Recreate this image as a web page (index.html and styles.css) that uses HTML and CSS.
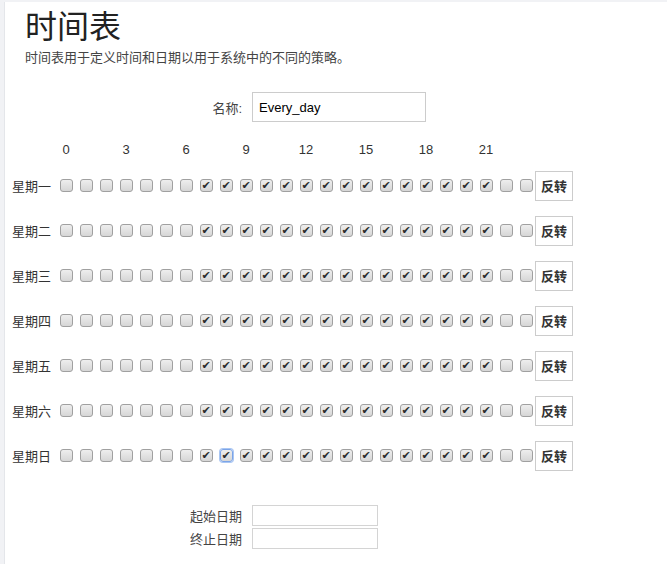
FILE: index.html
```html
<!DOCTYPE html>
<html lang="zh-CN">
<head>
    <meta charset="UTF-8">
    <meta name="viewport" content="width=device-width, initial-scale=1.0">
    <title>时间表</title>
    <link rel="stylesheet" href="styles.css">
</head>
<body>
    <div class="main">
        <h1>时间表</h1>
        <p class="desc">时间表用于定义时间和日期以用于系统中的不同的策略。</p>

        <div class="field name-field">
            <label for="name">名称:</label>
            <input type="text" id="name" class="name-input" value="Every_day">
        </div>

        <div class="hours" id="hours"></div>
        <div id="grid"></div>

        <div class="dates">
            <div class="field date-field">
                <label for="start">起始日期</label>
                <input type="text" id="start" class="date-input">
            </div>
            <div class="field date-field">
                <label for="end">终止日期</label>
                <input type="text" id="end" class="date-input">
            </div>
        </div>
    </div>

    <script>
        var days = ["星期一", "星期二", "星期三", "星期四", "星期五", "星期六", "星期日"];

        var hours = document.getElementById("hours");
        hours.innerHTML = '<span class="day"></span>';
        for (var h = 0; h < 24; h++) {
            hours.innerHTML += '<span class="cell">' + (h % 3 == 0 ? h : "") + '</span>';
        }

        var grid = document.getElementById("grid");
        days.forEach(function (day, d) {
            var html = '<div class="row"><span class="day">' + day + '</span>';
            for (var h = 0; h < 24; h++) {
                var checked = (h >= 7 && h <= 21) ? " checked" : "";
                var focus = (d == 6 && h == 8) ? " focused" : "";
                html += '<span class="cell"><input type="checkbox" class="box' + focus + '"' + checked + '></span>';
            }
            html += '<button class="invert" onclick="invertRow(this)">反转</button></div>';
            grid.innerHTML += html;
        });

        function invertRow(btn) {
            btn.parentNode.querySelectorAll("input").forEach(function (box) {
                box.checked = !box.checked;
            });
        }
    </script>
</body>
</html>
```

FILE: styles.css
```css
body { margin: 0; background: #f1f2f5; font-family: "Liberation Sans", Arial, "Noto Sans CJK SC", sans-serif; font-size: 13px; color: #333; }
.main { margin: 2px 0 0 4px; min-height: 562px; background: #fff; border-left: 1px solid #e4e6ea; padding-top: 7px; box-sizing: border-box; }

h1 { margin: 0 0 4px 20px; font-size: 32px; line-height: 36px; font-weight: normal; color: #222; }
.desc { margin: 0 0 25px 20px; line-height: 18px; color: #444; }

.field { display: flex; align-items: center; }
.field label { width: 237px; margin-right: 10px; text-align: right; color: #444; }
.name-input { width: 174px; height: 30px; box-sizing: border-box; border: 1px solid #ccc; padding: 0 6px; font: 13px "Liberation Sans", Arial, sans-serif; color: #000; }

.hours { display: flex; margin-top: 19px; line-height: 18px; }
.day { width: 51px; padding-right: 5px; text-align: right; flex-shrink: 0; box-sizing: border-box; color: #333; }
.cell { width: 20px; text-align: center; display: flex; justify-content: center; align-items: center; }

#grid { margin-top: 4px; }
.row { display: flex; align-items: center; height: 45px; }

.box { -webkit-appearance: none; appearance: none; margin: 0; width: 13px; height: 13px; border: 1px solid #a0a0a0; border-radius: 3px; background: linear-gradient(#eeeeee, #d6d6d6); position: relative; box-sizing: border-box; }
.box:checked::after { content: "\2714"; position: absolute; left: 1px; top: -1px; font: bold 11px/13px "DejaVu Sans", sans-serif; color: #2b2b2b; }
.box.focused { border-color: #7ba4e8; box-shadow: 0 0 0 1px #a9c6f3; }

.invert { margin-left: -1px; width: 38px; height: 30px; padding: 0; background: #fff; border: 1px solid #ccc; font: bold 13px "Liberation Sans", Arial, "Noto Sans CJK SC", sans-serif; color: #333; cursor: pointer; }
.invert:hover { background: #f4f4f4; }

.dates { margin-top: 27px; }
.date-field { margin-bottom: 2px; }
.date-input { width: 126px; height: 21px; box-sizing: border-box; border: 1px solid #d4d4d4; padding: 0 4px; }
```
